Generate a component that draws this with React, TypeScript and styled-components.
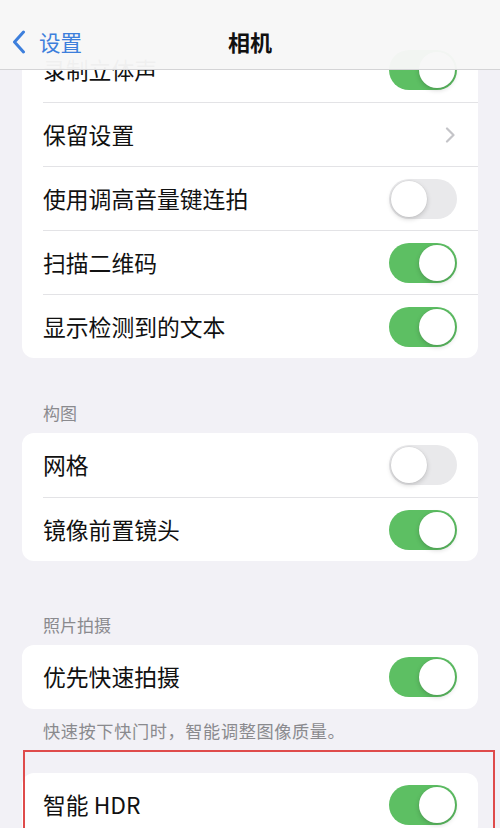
import React from 'react'
import styled, { createGlobalStyle } from 'styled-components'

const GlobalStyle = createGlobalStyle`
  html, body {
    margin: 0;
    padding: 0;
    background: #f2f1f6;
  }
  body {
    font-family: "Noto Sans CJK SC", "Noto Sans", sans-serif;
    color: #111;
  }
`

type Item =
  | { label: string; kind: 'toggle'; on: boolean }
  | { label: string; kind: 'link' }

const topGroup: Item[] = [
  { label: '录制立体声', kind: 'toggle', on: true },
  { label: '保留设置', kind: 'link' },
  { label: '使用调高音量键连拍', kind: 'toggle', on: false },
  { label: '扫描二维码', kind: 'toggle', on: true },
  { label: '显示检测到的文本', kind: 'toggle', on: true },
]

const compositionGroup: Item[] = [
  { label: '网格', kind: 'toggle', on: false },
  { label: '镜像前置镜头', kind: 'toggle', on: true },
]

const Toggle = ({ on }: { on: boolean }) => (
  <Track $on={on}>
    <Knob />
  </Track>
)

const Chevron = () => (
  <svg width="11" height="16" viewBox="0 0 11 16">
    <path d="M2 1.5 L8.5 8 L2 14.5" fill="none" stroke="#c4c4c8" strokeWidth="2.2" strokeLinecap="round" strokeLinejoin="round" />
  </svg>
)

const Group = ({ items }: { items: Item[] }) => (
  <Card>
    {items.map(item => (
      <Row key={item.label}>
        <RowInner>
          <Label>{item.label}</Label>
          {item.kind === 'toggle' ? <Toggle on={item.on} /> : <Chevron />}
        </RowInner>
      </Row>
    ))}
  </Card>
)

const App: React.FC = () => {
  return (
    <Page>
      <GlobalStyle />
      <NavBar>
        <Back>
          <svg width="14" height="24" viewBox="0 0 14 24">
            <path d="M11.5 2 L2.5 12 L11.5 22" fill="none" stroke="#3d7fdc" strokeWidth="3" strokeLinecap="round" strokeLinejoin="round" />
          </svg>
          <span>设置</span>
        </Back>
        <Title>相机</Title>
      </NavBar>
      <Content>
        <Group items={topGroup} />
        <SectionTitle $top={44}>构图</SectionTitle>
        <Group items={compositionGroup} />
        <SectionTitle $top={53}>照片拍摄</SectionTitle>
        <Group items={[{ label: '优先快速拍摄', kind: 'toggle', on: true }]} />
        <Footnote>快速按下快门时，智能调整图像质量。</Footnote>
        <Highlighted>
          <Group items={[{ label: '智能 HDR', kind: 'toggle', on: true }]} />
          <Marker />
        </Highlighted>
      </Content>
    </Page>
  )
}

const Page = styled.div`
  position: relative;
  width: 500px;
  height: 828px;
  overflow: hidden;
  background: #f2f1f6;
`
const NavBar = styled.div`
  position: absolute;
  top: 0;
  left: 0;
  right: 0;
  height: 70px;
  z-index: 2;
  display: flex;
  align-items: center;
  justify-content: center;
  padding-top: 12px;
  box-sizing: border-box;
  background: rgba(247, 247, 247, 0.97);
  border-bottom: 1px solid #d4d4d6;
`
const Back = styled.div`
  position: absolute;
  left: 12px;
  top: 29px;
  display: flex;
  align-items: center;
  gap: 13px;
  color: #3d7fdc;
  font-size: 21.5px;
  line-height: 26px;
`
const Title = styled.div`
  font-size: 22px;
  font-weight: 700;
  color: #111;
  line-height: 26px;
`
const Content = styled.div`
  padding: 38px 22px 0;
  display: flex;
  flex-direction: column;
`
const Card = styled.div`
  background: #fff;
  border-radius: 12px;
  overflow: hidden;
`
const Row = styled.div`
  padding-left: 21px;
`
const RowInner = styled.div`
  height: 64px;
  box-sizing: border-box;
  display: flex;
  align-items: center;
  justify-content: space-between;
  padding-right: 22px;
  ${Row} + ${Row} & {
    border-top: 1px solid #e3e3e6;
  }
`
const Label = styled.div`
  font-size: 22.8px;
  line-height: 30px;
  color: #111;
`
const Track = styled.div<{ $on: boolean }>`
  width: 68px;
  height: 40px;
  border-radius: 20px;
  margin-right: -1px;
  background: ${p => (p.$on ? '#5dbf63' : '#e9e9eb')};
  display: flex;
  align-items: center;
  justify-content: ${p => (p.$on ? 'flex-end' : 'flex-start')};
  padding: 0 2px;
  box-sizing: border-box;
`
const Knob = styled.div`
  width: 36px;
  height: 36px;
  border-radius: 50%;
  background: #fff;
  box-shadow: 0 2px 5px rgba(0, 0, 0, 0.18), 0 0 0 0.5px rgba(0, 0, 0, 0.06);
`
const SectionTitle = styled.div<{ $top: number }>`
  margin: ${p => p.$top}px 0 9px 21px;
  font-size: 17px;
  line-height: 22px;
  color: #8a8a8e;
`
const Footnote = styled.div`
  margin: 11px 0 0 21px;
  font-size: 17.2px;
  letter-spacing: 0.6px;
  line-height: 22px;
  color: #8a8a8e;
`
const Highlighted = styled.div`
  position: relative;
  margin-top: 31px;
`
const Marker = styled.div`
  position: absolute;
  left: 1px;
  top: -23px;
  width: 472px;
  height: 140px;
  box-sizing: border-box;
  border: 2px solid #df4b4b;
  pointer-events: none;
`

export default App
